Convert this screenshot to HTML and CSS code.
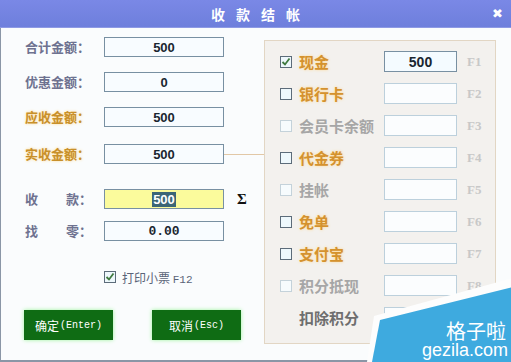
FILE: index.html
```
<!DOCTYPE html>
<html lang="zh">
<head>
<meta charset="utf-8">
<link rel="stylesheet" href="styles.css">
</head>
<body>
<div class="window">
  <div class="titlebar">
    <span class="title">收款结帐</span>
    <span class="close">✖</span>
  </div>
  <div class="content">
    <div class="left">
      <div class="row"><span class="lbl">合计金额：</span><div class="field">500</div></div>
      <div class="row"><span class="lbl">优惠金额：</span><div class="field">0</div></div>
      <div class="row"><span class="lbl orange">应收金额：</span><div class="field">500</div></div>
      <div class="row r4"><span class="lbl orange">实收金额：</span><div class="field">500</div><div class="link"></div></div>
      <div class="row r5"><span class="lbl spread"><span>收</span><span>款：</span></span><div class="field yellow"><span class="sel">500</span></div><span class="sigma">Σ</span></div>
      <div class="row"><span class="lbl spread"><span>找</span><span>零：</span></span><div class="field mono">0.00</div></div>
      <div class="print">
        <span class="cb on"><svg width="10" height="10" viewBox="0 0 10 10"><path d="M1.5 5 L4 7.5 L8.5 1.5" fill="none" stroke="#3f7a3f" stroke-width="1.8"/></svg></span>
        <span class="print-text">打印小票 <span class="fkey">F12</span></span>
      </div>
      <div class="buttons">
        <div class="btn">确定<span class="btn-en">(Enter)</span></div>
        <div class="btn">取消<span class="btn-en">(Esc)</span></div>
      </div>
    </div>
    <div class="panel">
      <div class="prow"><span class="cb on"><svg width="10" height="10" viewBox="0 0 10 10"><path d="M1.5 5 L4 7.5 L8.5 1.5" fill="none" stroke="#3f7a3f" stroke-width="1.8"/></svg></span><span class="plbl orange">现金</span><div class="pfield active">500</div><span class="fk">F1</span></div>
      <div class="prow"><span class="cb on"></span><span class="plbl orange">银行卡</span><div class="pfield"></div><span class="fk">F2</span></div>
      <div class="prow"><span class="cb off"></span><span class="plbl gray">会员卡余额</span><div class="pfield"></div><span class="fk">F3</span></div>
      <div class="prow"><span class="cb on"></span><span class="plbl orange">代金券</span><div class="pfield"></div><span class="fk">F4</span></div>
      <div class="prow"><span class="cb off"></span><span class="plbl gray">挂帐</span><div class="pfield"></div><span class="fk">F5</span></div>
      <div class="prow"><span class="cb on"></span><span class="plbl orange">免单</span><div class="pfield"></div><span class="fk">F6</span></div>
      <div class="prow"><span class="cb on"></span><span class="plbl orange">支付宝</span><div class="pfield"></div><span class="fk">F7</span></div>
      <div class="prow"><span class="cb off"></span><span class="plbl gray">积分抵现</span><div class="pfield"></div><span class="fk">F8</span></div>
      <div class="prow"><span class="cb none"></span><span class="plbl dark">扣除积分</span><div class="pfield"></div></div>
    </div>
    <div class="wm-white"></div>
    <div class="wm">
      <div class="wm-cn">格子啦</div>
      <div class="wm-en">gezila.com</div>
    </div>
  </div>
</div>
</body>
</html>
```

FILE: styles.css
```
* { box-sizing: border-box; }
html, body { margin: 0; padding: 0; }
body {
  width: 511px;
  height: 362px;
  overflow: hidden;
  background: #fafcfd;
  font-family: "Noto Sans CJK SC", sans-serif;
}
.window {
  width: 511px;
  height: 362px;
  display: flex;
  flex-direction: column;
}
.titlebar {
  height: 28px;
  background: linear-gradient(#7a88e6, #6e7fdc);
  border-bottom: 1px solid #8e9ae4;
  display: flex;
  align-items: center;
  justify-content: center;
  position: relative;
  color: #fff;
}
.title {
  font-size: 14px;
  font-weight: bold;
  letter-spacing: 11px;
  margin-left: 11px;
  line-height: 28px;
}
.close {
  position: absolute;
  right: 8px;
  top: 6px;
  font-size: 13px;
  font-family: "DejaVu Sans", sans-serif;
  line-height: 16px;
}
.content {
  flex: 1;
  display: flex;
  position: relative;
  border-left: 1px solid #8a96a6;
  border-bottom: 2px solid #8a96a6;
  background: #fafcfd;
}
.left {
  width: 263px;
  padding: 9px 0 0 24px;
  display: flex;
  flex-direction: column;
}
.row {
  display: flex;
  align-items: center;
  height: 20px;
  margin-bottom: 15px;
}
.row.r4 { margin-top: 2px; margin-bottom: 25px; }
.row.r5 { margin-bottom: 12px; }
.lbl {
  width: 79px;
  font-size: 13px;
  font-weight: bold;
  color: #6e7290;
  line-height: 20px;
}
.lbl.orange {
  color: #c8902a;
  text-shadow: 0 0 3px #ffd890;
}
.lbl.spread {
  display: flex;
  justify-content: space-between;
  padding-right: 12px;
}
.field {
  width: 120px;
  height: 20px;
  border: 1px solid #7890a2;
  background: #f8fcff;
  display: flex;
  align-items: center;
  justify-content: center;
  font-family: "Liberation Sans", sans-serif;
  font-size: 13px;
  font-weight: bold;
  color: #1a2630;
}
.field.yellow { background: #fbfb9c; }
.field.mono { font-family: "Liberation Mono", monospace; font-size: 13px; }
.sel {
  background: #3c6676;
  color: #fff;
  padding: 0 1px;
  line-height: 15px;
}
.sigma {
  margin-left: 13px;
  font-family: "Liberation Serif", serif;
  font-weight: bold;
  font-size: 15px;
  color: #111;
}
.link {
  width: 40px;
  height: 1px;
  background: #e2c8a6;
}
.print {
  display: flex;
  align-items: center;
  margin: 14px 0 0 79px;
  height: 14px;
}
.print .cb { margin-right: 6px; }
.print-text {
  font-size: 12px;
  color: #5a6478;
}
.fkey {
  font-family: "Liberation Mono", monospace;
  font-size: 11px;
}
.buttons {
  display: flex;
  gap: 39px;
  margin: 26px 0 0 -1px;
}
.btn {
  width: 89px;
  height: 30px;
  background: #0f6c14;
  box-shadow: 0 0 4px #9cf59c;
  color: #fff;
  font-size: 12px;
  display: flex;
  align-items: center;
  justify-content: center;
}
.btn-en {
  font-family: "Liberation Mono", monospace;
  font-size: 10px;
  margin-left: 1px;
}
.panel {
  margin-top: 12px;
  width: 232px;
  height: 304px;
  background: #f3f1ee;
  border: 1px solid #e2d6c4;
  padding: 10px 0 0 15px;
  display: flex;
  flex-direction: column;
  gap: 11px;
}
.prow {
  display: flex;
  align-items: center;
  height: 21px;
}
.cb {
  width: 12px;
  height: 12px;
  flex: none;
  display: flex;
  align-items: center;
  justify-content: center;
}
.cb.on { border: 1px solid #5c6c7a; background: #eef8fc; }
.cb.off { border: 1px solid #c4d2da; background: #f6fbfd; }
.plbl {
  width: 85px;
  margin-left: 7px;
  font-size: 15px;
  font-weight: bold;
  line-height: 21px;
}
.plbl.orange { color: #d4922e; text-shadow: 0 0 3px #ffd890; }
.plbl.gray { color: #a6a6a6; }
.plbl.dark { color: #6e6e6e; }
.pfield {
  width: 73px;
  height: 21px;
  border: 1px solid #bcd0dc;
  background: #fbfdfe;
  display: flex;
  align-items: center;
  justify-content: center;
  font-family: "Liberation Sans", sans-serif;
  font-size: 14px;
  font-weight: bold;
  color: #1a2630;
}
.pfield.active { border-color: #7890a2; background: #f4fbff; }
.fk {
  margin-left: 10px;
  font-family: "Liberation Serif", serif;
  font-weight: bold;
  font-size: 13px;
  color: #c8c8c8;
}
.wm-white {
  position: absolute;
  right: -2px;
  bottom: -2px;
  width: 146px;
  height: 84px;
  background: #fdfdfd;
  clip-path: polygon(0 100%, 7px 38px, 100% 0, 100% 100%);
}
.wm {
  position: absolute;
  right: -2px;
  bottom: -2px;
  width: 141px;
  height: 76px;
  background: #3eaadf;
  clip-path: polygon(0 100%, 8px 34px, 100% 1px, 100% 100%);
  display: flex;
  flex-direction: column;
  align-items: flex-end;
  justify-content: flex-end;
  padding: 0 5px 3px 0;
  color: #fff;
}
.wm-cn {
  font-size: 20px;
  line-height: 20px;
  height: 20px;
  margin: 0 2px 1px 0;
}
.wm-en {
  font-family: "Liberation Sans", sans-serif;
  font-size: 18px;
  line-height: 17px;
  height: 17px;
}
```
